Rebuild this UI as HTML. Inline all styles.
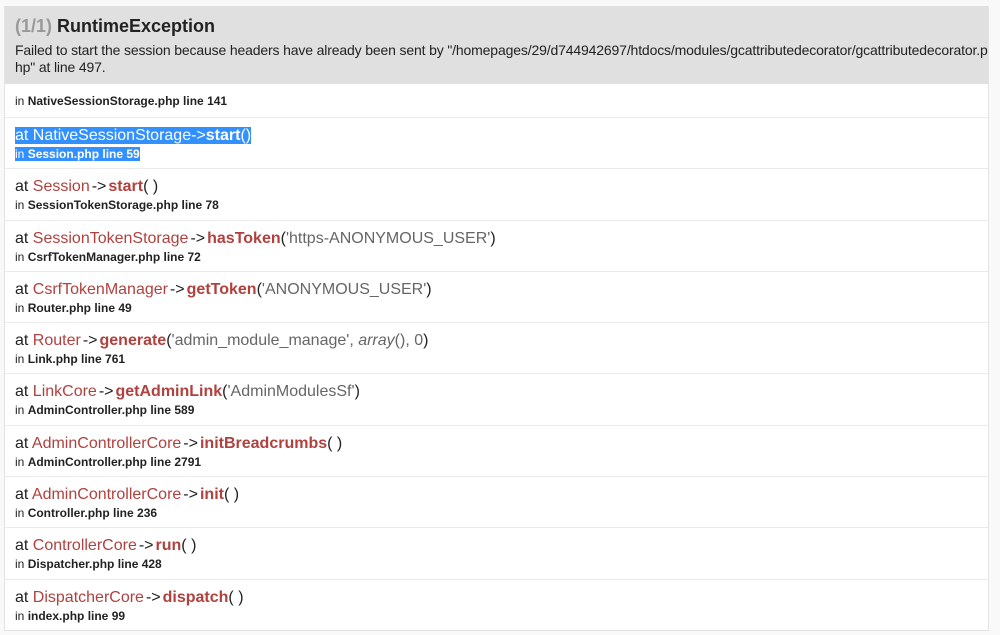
<!DOCTYPE html>
<html><head><meta charset="utf-8"><style>
body{margin:0;background:#f9f9f9;font-family:"Liberation Sans",Arial,sans-serif;color:#222;width:1000px;height:635px;overflow:hidden}
.box{position:absolute;left:4px;top:6px;width:983px;border:1px solid #e3e3e3;border-top:none;background:#fff}
.hd{background:#e0e0e0;padding:8px 10px 8px 10px;height:62px;overflow:hidden}
.hd h1{margin:0;font-size:18px;line-height:24px;font-weight:bold;color:#222}
.hd h1 span{color:#999}
.hd p{margin:4px 0 0;font-size:14px;line-height:17px;color:#222;white-space:nowrap;letter-spacing:-0.15px}
.r{border-top:1px solid #ebebeb;padding:8px 10px 0 10px;height:42.3px;box-sizing:content-box}
.r0{height:24px;padding-top:9px;border-top:none}
.at{font-size:16px;line-height:20px;color:#222;white-space:nowrap}
.in{font-size:12px;line-height:17px;white-space:nowrap}
.in b{font-weight:bold}
.c{color:#b0413e}
.m{color:#b0413e;font-weight:bold}
.s{color:#666}
.a{margin:0 2px}
.sel{background:#3390ff;color:#fff}
</style></head><body>
<div class="box">
<div class="hd"><h1><span>(1/1)</span> RuntimeException</h1>
<p>Failed to start the session because headers have already been sent by "/homepages/29/d744942697/htdocs/modules/gcattributedecorator/gcattributedecorator.p<br>hp" at line 497.</p></div>
<div class="r r0"><div class="in">in <b>NativeSessionStorage.php line 141</b></div></div>
<div class="r"><div class="at"><span class="sel">at NativeSessionStorage-&gt;<b>start</b>()</span></div><div class="in"><span class="sel">in <b>Session.php line 59</b></span></div></div>
<div class="r"><div class="at">at <span class="c">Session</span><span class="a">-&gt;</span><span class="m">start</span>( )</div><div class="in">in <b>SessionTokenStorage.php line 78</b></div></div>
<div class="r"><div class="at">at <span class="c">SessionTokenStorage</span><span class="a">-&gt;</span><span class="m">hasToken</span>(<span class="s">'https-ANONYMOUS_USER'</span>)</div><div class="in">in <b>CsrfTokenManager.php line 72</b></div></div>
<div class="r"><div class="at">at <span class="c">CsrfTokenManager</span><span class="a">-&gt;</span><span class="m">getToken</span>(<span class="s">'ANONYMOUS_USER'</span>)</div><div class="in">in <b>Router.php line 49</b></div></div>
<div class="r"><div class="at">at <span class="c">Router</span><span class="a">-&gt;</span><span class="m">generate</span>(<span class="s">'admin_module_manage', <i>array</i>(), 0</span>)</div><div class="in">in <b>Link.php line 761</b></div></div>
<div class="r"><div class="at">at <span class="c">LinkCore</span><span class="a">-&gt;</span><span class="m">getAdminLink</span>(<span class="s">'AdminModulesSf'</span>)</div><div class="in">in <b>AdminController.php line 589</b></div></div>
<div class="r"><div class="at">at <span class="c">AdminControllerCore</span><span class="a">-&gt;</span><span class="m">initBreadcrumbs</span>( )</div><div class="in">in <b>AdminController.php line 2791</b></div></div>
<div class="r"><div class="at">at <span class="c">AdminControllerCore</span><span class="a">-&gt;</span><span class="m">init</span>( )</div><div class="in">in <b>Controller.php line 236</b></div></div>
<div class="r"><div class="at">at <span class="c">ControllerCore</span><span class="a">-&gt;</span><span class="m">run</span>( )</div><div class="in">in <b>Dispatcher.php line 428</b></div></div>
<div class="r"><div class="at">at <span class="c">DispatcherCore</span><span class="a">-&gt;</span><span class="m">dispatch</span>( )</div><div class="in">in <b>index.php line 99</b></div></div>
</div>
</body></html>
